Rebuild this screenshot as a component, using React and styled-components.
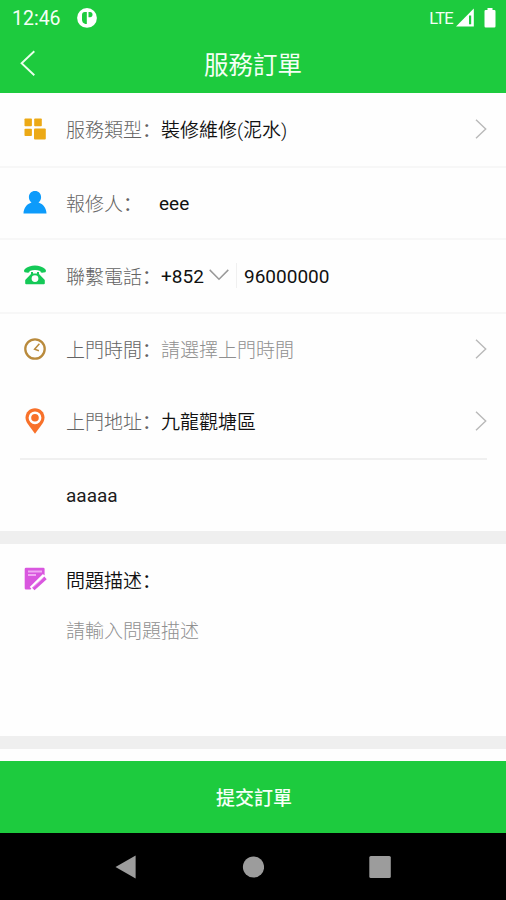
import React from 'react';
import styled, { createGlobalStyle } from 'styled-components';

const GlobalStyle = createGlobalStyle`
  * {
    box-sizing: border-box;
  }

  body {
    margin: 0;
    background: #fff;
    font-family: Roboto, 'Noto Sans CJK SC', sans-serif;
    font-size: 19px;
    color: #1c1c1c;
  }

  svg {
    display: block;
    flex-shrink: 0;
  }
`;

const Screen = styled.div`
  display: flex;
  flex-direction: column;
  width: 506px;
  height: 900px;
  overflow: hidden;
  background: #fefefe;
`;

const Header = styled.header`
  height: 93px;
  background: #1dcb3e;
  color: #f4fff5;
`;

const StatusBar = styled.div`
  display: flex;
  align-items: center;
  height: 36px;
  padding: 0 10px 0 12px;
  font-size: 19.5px;
`;

const StatusIcons = styled.div`
  display: flex;
  align-items: center;
  margin-left: auto;
  font-size: 16.5px;
  letter-spacing: -0.7px;

  span {
    margin-right: 3px;
  }
`;

const Clock = styled.span`
  width: 65px;
  white-space: nowrap;
`;

const TitleBar = styled.div`
  display: grid;
  grid-template-columns: 60px 1fr 60px;
  align-items: center;
  height: 54px;
  padding: 0 20px;
`;

const Title = styled.h1`
  margin: 0;
  padding-top: 5px;
  font-size: 24.5px;
  font-weight: 400;
  line-height: 36px;
  text-align: center;
`;

const Row = styled.div`
  display: flex;
  align-items: center;
  height: ${({ $height }) => $height}px;
  padding: 0 19px 2px 20px;
  border-bottom: ${({ $divided }) => ($divided ? '2px solid #f7f7f7' : '0')};
  line-height: 28px;
  white-space: nowrap;
`;

const IconSlot = styled.div`
  display: flex;
  flex-shrink: 0;
  justify-content: center;
  width: 30px;
  margin-right: 16px;
`;

const Label = styled.span`
  width: ${({ $width }) => $width || 95}px;
  padding-top: 5px;
  color: ${({ $strong }) => ($strong ? '#111' : '#636363')};
  font-weight: ${({ $strong }) => ($strong ? 350 : 300)};
`;

const Colon = styled.span`
  font-weight: 400;
`;

const Value = styled.span`
  padding-top: ${({ $latin }) => ($latin ? 3 : 5)}px;
  color: ${({ $muted }) => ($muted ? '#8f8f8f' : '#111')};
  font-weight: ${({ $muted, $latin }) => ($muted ? 300 : $latin ? 400 : 350)};
`;

const CountryCode = styled.div`
  display: flex;
  align-items: center;
  gap: 5px;
  height: 25px;
  width: 76px;
  margin-right: 7px;
  border-right: 1px solid #f0f0f0;
`;

const ArrowSlot = styled.div`
  margin-left: auto;
`;

const AddressLine = styled.div`
  height: 73px;
  margin: 0 19px 0 20px;
  padding: 22px 0 0 46px;
  border-top: 2px solid #f0f0f0;
  line-height: 28px;
`;

const Band = styled.div`
  height: 13px;
  background: #efefef;
`;

const Description = styled.section`
  height: 192px;
`;

const Placeholder = styled.p`
  margin: 0;
  padding: 2px 0 0 66px;
  font-weight: 300;
  line-height: 28px;
  color: #8f8f8f;
`;

const SubmitButton = styled.button`
  height: 72px;
  margin-top: 12px;
  padding: 0 0 2px 2px;
  border: 0;
  background: #1dcb3e;
  color: #f6fff7;
  font-family: inherit;
  font-size: 19px;
  font-weight: 500;
`;

const NavBar = styled.nav`
  display: flex;
  flex: 1;
  justify-content: space-between;
  padding: 22px 115px 0;
  background: #000;
`;

const FieldLabel = ({ text, width, strong }) => (
  <Label $width={width} $strong={strong}>
    {text}
    <Colon>：</Colon>
  </Label>
);

const ArrowRight = () => (
  <ArrowSlot>
    <svg width="12" height="20" viewBox="0 0 12 20" fill="none" stroke="#b9b9b9" strokeWidth="1.4">
      <path d="M1 .8 10.7 10 1 19.2" />
    </svg>
  </ArrowSlot>
);

const ServiceIcon = () => (
  <svg width="22" height="22" viewBox="0 0 22 22" fill="#eca915">
    <rect x=".5" y=".5" width="7.4" height="7.8" rx=".8" />
    <rect x="10.2" y=".5" width="7.6" height="7.8" rx=".8" />
    <rect x=".5" y="10.7" width="7.4" height="7.3" rx=".8" />
    <rect x="10" y="10.5" width="11.8" height="11" rx="1" />
  </svg>
);

const PersonIcon = () => (
  <svg width="24" height="23" viewBox="0 0 24 23" fill="#0d9bfb">
    <path d="M12 0C8.3 0 5.9 2.7 5.9 6.2c0 2.1 1 4 2.6 5.2C4 12.8.6 16.7.5 22.6h23c-.1-5.9-3.5-9.8-8-11.2 1.6-1.2 2.6-3.1 2.6-5.2C18.1 2.7 15.7 0 12 0Z" />
  </svg>
);

const PhoneIcon = () => (
  <svg width="24" height="20" viewBox="0 0 24 20" fill="#14c957">
    <path d="M1.7 7.2C.7 6.8.8 5.2 1.9 4.1 4.4 1.5 8 .4 12 .4s7.6 1.1 10.1 3.7c1.1 1.1 1.2 2.7.2 3.1l-3.2.6c-1 .1-1.7-.6-1.8-1.7-3.3-1.4-7.3-1.4-10.6 0-.1 1.1-.8 1.8-1.8 1.7Z" />
    <path
      fillRule="evenodd"
      d="M8 7h2v1.6h4V7h2v2l5.8 6v3.2q0 1-1 1H3.2q-1 0-1-1V15L8 9ZM12 10.2a3.4 3.4 0 1 0 0 6.8 3.4 3.4 0 0 0 0-6.8Z"
    />
  </svg>
);

const ClockIcon = () => (
  <svg width="22" height="22" viewBox="0 0 22 22" fill="none" stroke="#b98a3c">
    <circle cx="11" cy="11" r="9.7" strokeWidth="2.3" />
    <path d="M15.4 5.8 10.6 11.2l4.3 1.5" strokeWidth="1.5" />
  </svg>
);

const PinIcon = () => (
  <svg width="20" height="26" viewBox="0 0 20 26">
    <path
      d="M10 .3C4.6.3.5 4.4.5 9.6c0 2.4 1 4.5 2.3 6.4L10 25.7 17.2 16c1.3-1.9 2.3-4 2.3-6.4C19.5 4.4 15.4.3 10 .3Z"
      fill="#f8712a"
    />
    <circle cx="10" cy="9.8" r="5.1" fill="none" stroke="#fff" strokeWidth="2.6" />
  </svg>
);

const NoteIcon = () => (
  <svg width="23" height="24" viewBox="0 0 23 24">
    <path d="M2 .7h17.3q1.3 0 1.3 1.3v6L6.5 22.5H2q-1.3 0-1.3-1.3V2Q.7.7 2 .7Z" fill="#d957df" />
    <path d="M4 4.5h14M4 8h8" stroke="#f0aaf3" strokeWidth="1.8" />
    <path d="M20.7 8.8 7.5 21.7" stroke="#fff" strokeWidth="5" />
    <path d="M21.5 10.8 9.3 22" stroke="#d957df" strokeWidth="3.6" />
    <path d="m19.6 10.6-10.4 9.6" stroke="#f0aaf3" strokeWidth=".8" />
  </svg>
);

const App = () => (
  <>
    <GlobalStyle />
    <Screen>
      <Header>
        <StatusBar>
          <Clock>12:46</Clock>
          <svg width="20" height="20" viewBox="0 0 20 20">
            <circle cx="10" cy="9.9" r="9.9" fill="#fff" />
            <path d="M7.8 4h2v12H8.3Q5 15 5 11.5V7q0-3 2.8-3Z" fill="#1dcb3e" />
            <path d="M11.5 4H13q2.5 0 2.5 2.6T13 9.2h-1.5Z" fill="#1dcb3e" />
          </svg>
          <StatusIcons>
            <span>LTE</span>
            <svg width="18" height="20" viewBox="0 0 18 20">
              <path d="M17.8.5v18H0Z" fill="#fff" />
              <path d="M13 7.5h2.2v8.8H13Z" fill="#1dcb3e" />
            </svg>
            <svg width="22" height="20" viewBox="0 0 22 20" fill="#fff">
              <path d="M13.5 0h5v2h1.8q1.2 0 1.2 1.2v15q0 1.2-1.2 1.2h-8.6q-1.2 0-1.2-1.2v-15Q10.500 2 11.700 2h1.8Z" />
            </svg>
          </StatusIcons>
        </StatusBar>
        <TitleBar>
          <svg width="16" height="27" viewBox="0 0 16 27" fill="none" stroke="#eaffec" strokeWidth="1.9">
            <path d="M14.3 1.3 1.6 13.3l12.7 12" />
          </svg>
          <Title>服務訂單</Title>
        </TitleBar>
      </Header>

      <Row $height={75} $divided>
        <IconSlot>
          <ServiceIcon />
        </IconSlot>
        <FieldLabel text="服務類型" />
        <Value>裝修維修(泥水)</Value>
        <ArrowRight />
      </Row>
      <Row $height={72} $divided>
        <IconSlot>
          <PersonIcon />
        </IconSlot>
        <FieldLabel text="報修人" width={93} />
        <Value $latin>eee</Value>
      </Row>
      <Row $height={74} $divided>
        <IconSlot>
          <PhoneIcon />
        </IconSlot>
        <FieldLabel text="聯繫電話" />
        <CountryCode>
          <Value $latin>+852</Value>
          <svg width="20" height="12" viewBox="0 0 20 12" fill="none" stroke="#999" strokeWidth="1.5">
            <path d="m.7.9 9.3 9.4L19.3.9" />
          </svg>
        </CountryCode>
        <Value $latin>96000000</Value>
      </Row>
      <Row $height={71}>
        <IconSlot>
          <ClockIcon />
        </IconSlot>
        <FieldLabel text="上門時間" />
        <Value $muted>請選擇上門時間</Value>
        <ArrowRight />
      </Row>
      <Row $height={73}>
        <IconSlot>
          <PinIcon />
        </IconSlot>
        <FieldLabel text="上門地址" />
        <Value>九龍觀塘區</Value>
        <ArrowRight />
      </Row>
      <AddressLine>aaaaa</AddressLine>

      <Band />
      <Description>
        <Row $height={72}>
          <IconSlot>
            <NoteIcon />
          </IconSlot>
          <FieldLabel text="問題描述" strong />
        </Row>
        <Placeholder>請輸入問題描述</Placeholder>
      </Description>
      <Band />

      <SubmitButton type="button">提交訂單</SubmitButton>
      <NavBar>
        <svg width="22" height="24" viewBox="0 0 22 24" fill="#9c9c9c">
          <path d="M20.6.5v23L.5 12Z" />
        </svg>
        <svg width="22" height="24" viewBox="0 0 22 24" fill="#9c9c9c">
          <circle cx="11.5" cy="12" r="10.6" />
        </svg>
        <svg width="22" height="24" viewBox="0 0 22 24" fill="#9c9c9c">
          <rect x=".3" y="1" width="21.5" height="22" rx="1.5" />
        </svg>
      </NavBar>
    </Screen>
  </>
);

export default App;
